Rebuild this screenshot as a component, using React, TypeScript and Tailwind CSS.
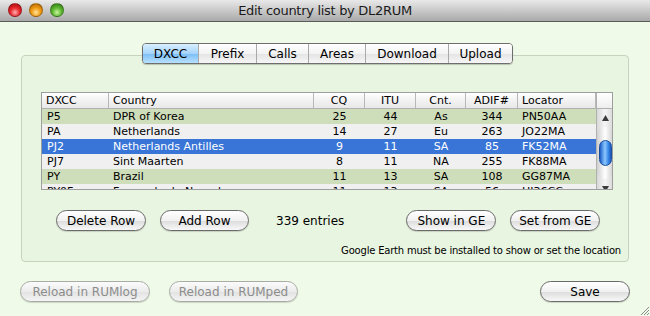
import React from "react"

const font = { fontFamily: '"DejaVu Sans", "Liberation Sans", sans-serif' }

type Row = {
  dxcc: string
  country: string
  cq: string
  itu: string
  cnt: string
  adif: string
  loc: string
  tone: "green" | "grey" | "sel"
}

const rows: Row[] = [
  { dxcc: "P5", country: "DPR of Korea", cq: "25", itu: "44", cnt: "As", adif: "344", loc: "PN50AA", tone: "green" },
  { dxcc: "PA", country: "Netherlands", cq: "14", itu: "27", cnt: "Eu", adif: "263", loc: "JO22MA", tone: "grey" },
  { dxcc: "PJ2", country: "Netherlands Antilles", cq: "9", itu: "11", cnt: "SA", adif: "85", loc: "FK52MA", tone: "sel" },
  { dxcc: "PJ7", country: "Sint Maarten", cq: "8", itu: "11", cnt: "NA", adif: "255", loc: "FK88MA", tone: "grey" },
  { dxcc: "PY", country: "Brazil", cq: "11", itu: "13", cnt: "SA", adif: "108", loc: "GG87MA", tone: "green" },
  { dxcc: "PY0F", country: "Fernando de Noronha", cq: "11", itu: "13", cnt: "SA", adif: "56", loc: "HI36CC", tone: "grey" },
]

const tabs = ["DXCC", "Prefix", "Calls", "Areas", "Download", "Upload"]
const tabWidths = ["w-[55px]", "w-[58px]", "w-[52px]", "w-[57px]", "w-[83px]", "w-[64px]"]

const cols = "grid grid-cols-[67px_205px_51px_51px_50px_52px_78px]"

function AquaButton({ label, width, disabled }: { label: string; width: string; disabled?: boolean }) {
  return (
    <div
      className={`${width} h-[21px] rounded-full border flex items-center justify-center text-[12px] shadow-[0_1px_1px_rgba(0,0,0,0.15)] ${
        disabled
          ? "border-[#a8aca4] text-[#8c8c8c] bg-[linear-gradient(#fbfbfb,#ececec_50%,#e2e2e2_51%,#f4f4f4)]"
          : "border-[#6a6a6a] text-black bg-[linear-gradient(#ffffff,#f1f1f1_50%,#dcdcdc_51%,#f8f8f8)]"
      }`}
    >
      {label}
    </div>
  )
}

function Light({ grad }: { grad: string }) {
  return <div className={`w-[14px] h-[14px] rounded-full border border-[#00000040] ${grad}`} />
}

export default function App() {
  return (
    <div style={font} className="w-[650px] h-[316px] bg-[#effbe8] flex flex-col overflow-hidden relative">
      {/* title bar */}
      <div className="h-[22px] shrink-0 relative flex items-center justify-center border-b border-[#5b5b5b] bg-[linear-gradient(#e9e9e9,#c9c9c9_50%,#a9a9a9)]">
        <div className="absolute left-[8px] top-[3px] flex gap-[7px]">
          <Light grad="bg-[radial-gradient(circle_at_50%_70%,#ffb0b0,#e8262b_45%,#9c0c10)]" />
          <Light grad="bg-[radial-gradient(circle_at_50%_70%,#ffe39a,#f09a12_45%,#a65e05)]" />
          <Light grad="bg-[radial-gradient(circle_at_50%_70%,#c8f5a0,#5cb730_45%,#2f7417)]" />
        </div>
        <span className="text-[13px] text-[#1a1a1a] tracking-[-0.3px]">Edit country list by DL2RUM</span>
      </div>

      {/* content */}
      <div className="px-[21px] flex flex-col">
        {/* tabs */}
        <div className="mt-[21px] flex justify-center pl-[5px] relative z-10">
          <div className="flex h-[21px] rounded-[4px] border border-[#6e6e6e] overflow-hidden shadow-[0_1px_1px_rgba(0,0,0,0.2)] text-[12px]">
            {tabs.map((t, i) => (
              <div
                key={t}
                className={`${tabWidths[i]} flex items-center justify-center ${i > 0 ? "border-l border-[#a9a9a9]" : ""} ${
                  i === 0
                    ? "bg-[linear-gradient(#d8efff,#a6d4fa_50%,#79bdf4_51%,#b8e1ff)]"
                    : "bg-[linear-gradient(#ffffff,#f3f3f3_50%,#e4e4e4_51%,#f6f6f6)]"
                }`}
              >
                {t}
              </div>
            ))}
          </div>
        </div>

        {/* panel */}
        <div className="-mt-[9px] h-[207px] rounded-[4px] border border-[#c6d4bd] bg-[#e8f5e0] flex flex-col pt-[36px] pl-[19px] pr-[17px]">
          {/* table */}
          <div className="w-[572px] h-[98px] border border-[#9e9e9e] bg-[#f0f0f0] flex overflow-hidden text-[11px]">
            <div className="w-[554px] flex flex-col">
              <div className={`${cols} h-[16px] shrink-0 border-b border-[#b0b0b0] bg-[linear-gradient(#ffffff,#f2f2f2_50%,#e8e8e8)]`}>
                {["DXCC", "Country", "CQ", "ITU", "Cnt.", "ADIF#", "Locator"].map((h, i) => (
                  <div
                    key={h}
                    className={`leading-[15px] border-r border-[#b8b8b8] ${i < 2 || i === 6 ? "pl-[4px] text-left" : "text-center"}`}
                  >
                    {h}
                  </div>
                ))}
              </div>
              {rows.map((r) => (
                <div
                  key={r.dxcc}
                  className={`${cols} h-[15px] shrink-0 leading-[15px] ${
                    r.tone === "green" ? "bg-[#cfdeba] text-black" : r.tone === "sel" ? "bg-[#3875d7] text-white" : "bg-[#f0f0f0] text-black"
                  }`}
                >
                  <div className="pl-[5px]">{r.dxcc}</div>
                  <div className="pl-[4px]">{r.country}</div>
                  <div className="text-center">{r.cq}</div>
                  <div className="text-center">{r.itu}</div>
                  <div className="text-center">{r.cnt}</div>
                  <div className="text-center">{r.adif}</div>
                  <div className="pl-[4px]">{r.loc}</div>
                </div>
              ))}
            </div>
            {/* scrollbar */}
            <div className="w-[18px] flex flex-col border-l border-[#b0b0b0]">
              <div className="h-[16px] shrink-0 border-b border-[#b0b0b0] bg-[linear-gradient(#ffffff,#eeeeee)]" />
              <div className="flex-1 flex flex-col items-center bg-[linear-gradient(90deg,#d8d8d8,#f6f6f6_50%,#d8d8d8)]">
                <svg width="9" height="8" viewBox="0 0 9 8" className="mt-[5px]">
                  <path d="M4.5 1 L8 7 L1 7 Z" fill="#3c3c3c" />
                </svg>
                <div className="mt-[5px] w-[16px] h-[52px] rounded-full bg-[linear-gradient(90deg,#cfcfcf,#ffffff_50%,#cfcfcf)] flex items-center justify-center">
                  <div className="w-[13px] h-[26px] rounded-full border border-[#1c4f9c] bg-[linear-gradient(90deg,#1d5ec7,#8cc8ff_45%,#3a8ae8_75%,#1b56bc)]" />
                </div>
                <svg width="9" height="8" viewBox="0 0 9 8" className="mt-[6px]">
                  <path d="M1 1 L8 1 L4.5 7 Z" fill="#3c3c3c" />
                </svg>
              </div>
            </div>
          </div>

          {/* buttons row */}
          <div className="mt-[20px] flex items-center pl-[15px]">
            <AquaButton label="Delete Row" width="w-[90px]" />
            <div className="ml-[14px]">
              <AquaButton label="Add Row" width="w-[89px]" />
            </div>
            <span className="ml-[27px] text-[12px]">339 entries</span>
            <div className="ml-[62px]">
              <AquaButton label="Show in GE" width="w-[90px]" />
            </div>
            <div className="ml-[14px]">
              <AquaButton label="Set from GE" width="w-[90px]" />
            </div>
          </div>
          <div className="mt-[12px] -mr-[10px] text-right text-[10px] tracking-[-0.2px]">
            Google Earth must be installed to show or set the location
          </div>
        </div>

        {/* bottom buttons */}
        <div className="mt-[19px] flex items-center -ml-[1px]">
          <AquaButton label="Reload in RUMlog" width="w-[130px]" disabled />
          <div className="ml-[19px]">
            <AquaButton label="Reload in RUMped" width="w-[129px]" disabled />
          </div>
          <div className="ml-auto -mr-[1px]">
            <AquaButton label="Save" width="w-[90px]" />
          </div>
        </div>
      </div>

      {/* resize grip */}
      <svg width="12" height="12" viewBox="0 0 12 12" className="absolute right-0 bottom-0">
        <path d="M11 3 L3 11 M11 6 L6 11 M11 9 L9 11" stroke="#8a8a8a" strokeWidth="1" />
      </svg>
    </div>
  )
}
